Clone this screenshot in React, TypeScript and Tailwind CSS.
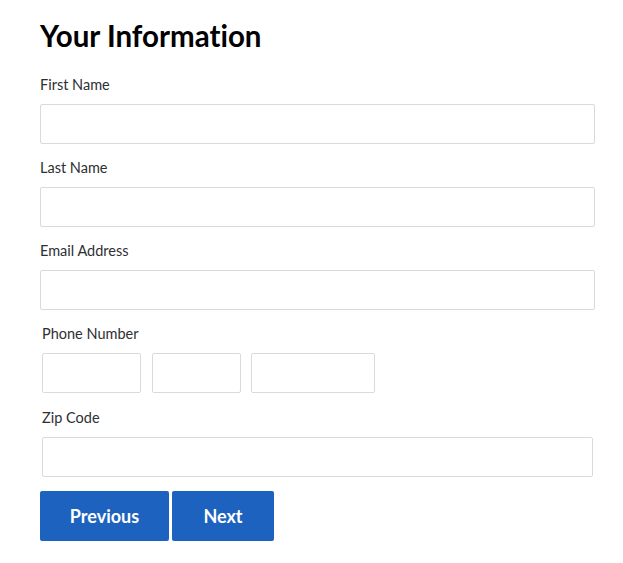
import React from 'react';

const Field = ({ label, className = '' }: { label: string; className?: string }) => (
  <div className={className}>
    <label className="block text-[14.5px] leading-5 text-[#2e2f32] mb-[9px]">{label}</label>
    <input className="block w-full h-10 border border-[#dadada] rounded-[2px] bg-white outline-none" />
  </div>
);

const App = () => {
  return (
    <div className="bg-white min-h-screen font-['Lato',sans-serif] [font-variant-ligatures:none]">
      <div className="pl-10 pt-[16px] w-[595px]">
        <h1 className="text-[29.5px] leading-10 font-bold text-black mb-[19px]">Your Information</h1>
        <Field label="First Name" />
        <Field label="Last Name" className="mt-[14px]" />
        <Field label="Email Address" className="mt-[14px]" />
        <div className="mt-[14px] pl-[2px]">
          <label className="block text-[14.5px] leading-5 text-[#2e2f32] mb-[9px]">Phone Number</label>
          <div className="flex">
            <input className="h-10 w-[99px] border border-[#dadada] rounded-[2px] outline-none" />
            <input className="h-10 w-[89px] ml-[11px] border border-[#dadada] rounded-[2px] outline-none" />
            <input className="h-10 w-[124px] ml-[10px] border border-[#dadada] rounded-[2px] outline-none" />
          </div>
        </div>
        <Field label="Zip Code" className="mt-[15px] px-[2px]" />
        <div className="flex gap-[3px] mt-[14px]">
          <button className="h-[50px] w-[129px] bg-[#1e62c0] text-white text-[18px] font-bold rounded-[2px]">Previous</button>
          <button className="h-[50px] w-[102px] bg-[#1e62c0] text-white text-[18px] font-bold rounded-[2px]">Next</button>
        </div>
      </div>
    </div>
  );
};

export default App;
